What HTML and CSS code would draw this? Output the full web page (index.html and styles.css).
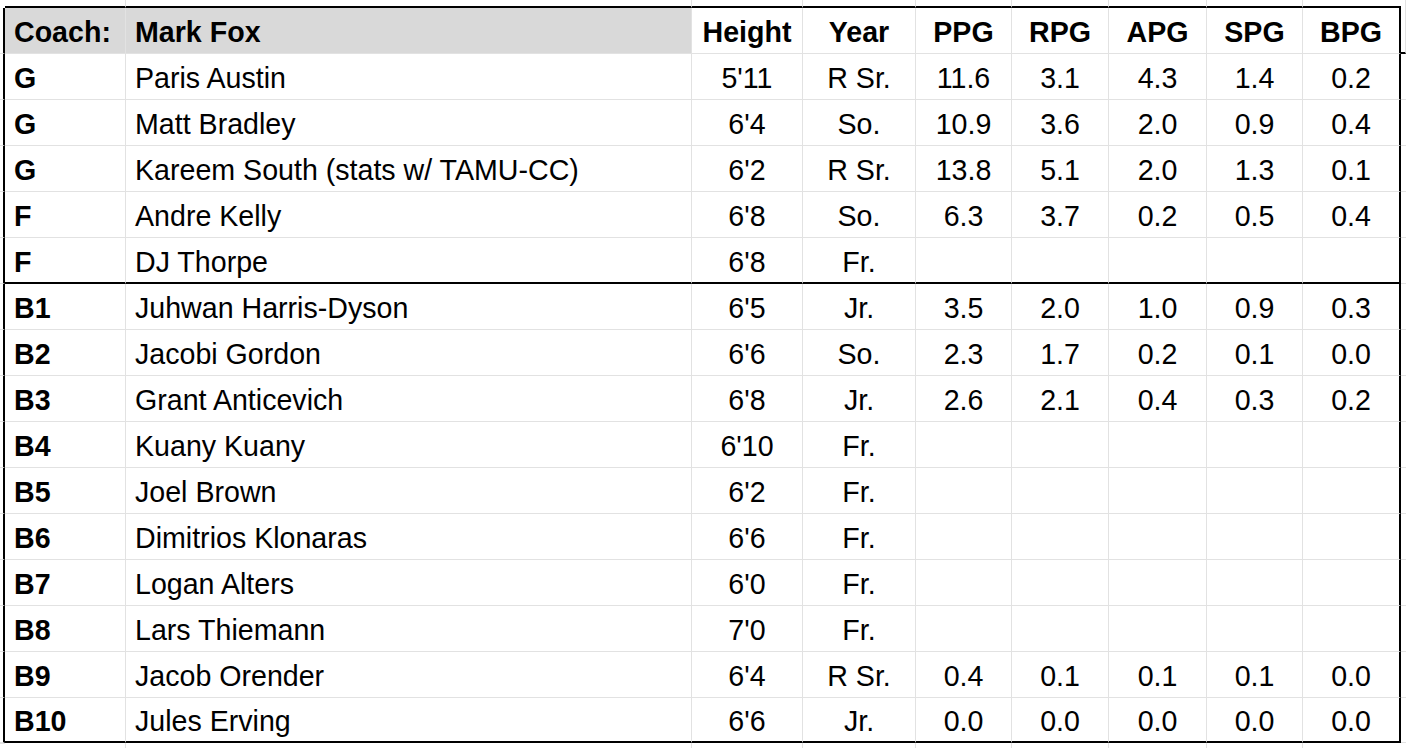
FILE: index.html
```html
<!DOCTYPE html>
<html lang="en">
<head>
<meta charset="utf-8">
<title>Roster</title>
<link rel="stylesheet" href="styles.css">
</head>
<body>
<div class="sheet">
  <div class="row top">
    <div class="gl"></div><div class="c"></div><div class="c"></div><div class="c"></div><div class="c"></div><div class="c"></div><div class="c"></div><div class="c"></div><div class="c"></div><div class="c last"></div><div class="gr"></div>
  </div>
  <div class="row head">
    <div class="gl"></div><div class="c fill">Coach:</div><div class="c fill">Mark Fox</div><div class="c n">Height</div><div class="c n">Year</div><div class="c n">PPG</div><div class="c n">RPG</div><div class="c n">APG</div><div class="c n">SPG</div><div class="c n last">BPG</div><div class="gr"></div>
  </div>
  <div class="row">
    <div class="gl"></div><div class="c b">G</div><div class="c">Paris Austin</div><div class="c n">5'11</div><div class="c n">R Sr.</div><div class="c n">11.6</div><div class="c n">3.1</div><div class="c n">4.3</div><div class="c n">1.4</div><div class="c n last">0.2</div><div class="gr"></div>
  </div>
  <div class="row">
    <div class="gl"></div><div class="c b">G</div><div class="c">Matt Bradley</div><div class="c n">6'4</div><div class="c n">So.</div><div class="c n">10.9</div><div class="c n">3.6</div><div class="c n">2.0</div><div class="c n">0.9</div><div class="c n last">0.4</div><div class="gr"></div>
  </div>
  <div class="row">
    <div class="gl"></div><div class="c b">G</div><div class="c">Kareem South (stats w/ TAMU-CC)</div><div class="c n">6'2</div><div class="c n">R Sr.</div><div class="c n">13.8</div><div class="c n">5.1</div><div class="c n">2.0</div><div class="c n">1.3</div><div class="c n last">0.1</div><div class="gr"></div>
  </div>
  <div class="row">
    <div class="gl"></div><div class="c b">F</div><div class="c">Andre Kelly</div><div class="c n">6'8</div><div class="c n">So.</div><div class="c n">6.3</div><div class="c n">3.7</div><div class="c n">0.2</div><div class="c n">0.5</div><div class="c n last">0.4</div><div class="gr"></div>
  </div>
  <div class="row sep">
    <div class="gl"></div><div class="c b">F</div><div class="c">DJ Thorpe</div><div class="c n">6'8</div><div class="c n">Fr.</div><div class="c n"></div><div class="c n"></div><div class="c n"></div><div class="c n"></div><div class="c n last"></div><div class="gr"></div>
  </div>
  <div class="row">
    <div class="gl"></div><div class="c b">B1</div><div class="c">Juhwan Harris-Dyson</div><div class="c n">6'5</div><div class="c n">Jr.</div><div class="c n">3.5</div><div class="c n">2.0</div><div class="c n">1.0</div><div class="c n">0.9</div><div class="c n last">0.3</div><div class="gr"></div>
  </div>
  <div class="row">
    <div class="gl"></div><div class="c b">B2</div><div class="c">Jacobi Gordon</div><div class="c n">6'6</div><div class="c n">So.</div><div class="c n">2.3</div><div class="c n">1.7</div><div class="c n">0.2</div><div class="c n">0.1</div><div class="c n last">0.0</div><div class="gr"></div>
  </div>
  <div class="row">
    <div class="gl"></div><div class="c b">B3</div><div class="c">Grant Anticevich</div><div class="c n">6'8</div><div class="c n">Jr.</div><div class="c n">2.6</div><div class="c n">2.1</div><div class="c n">0.4</div><div class="c n">0.3</div><div class="c n last">0.2</div><div class="gr"></div>
  </div>
  <div class="row">
    <div class="gl"></div><div class="c b">B4</div><div class="c">Kuany Kuany</div><div class="c n">6'10</div><div class="c n">Fr.</div><div class="c n"></div><div class="c n"></div><div class="c n"></div><div class="c n"></div><div class="c n last"></div><div class="gr"></div>
  </div>
  <div class="row">
    <div class="gl"></div><div class="c b">B5</div><div class="c">Joel Brown</div><div class="c n">6'2</div><div class="c n">Fr.</div><div class="c n"></div><div class="c n"></div><div class="c n"></div><div class="c n"></div><div class="c n last"></div><div class="gr"></div>
  </div>
  <div class="row">
    <div class="gl"></div><div class="c b">B6</div><div class="c">Dimitrios Klonaras</div><div class="c n">6'6</div><div class="c n">Fr.</div><div class="c n"></div><div class="c n"></div><div class="c n"></div><div class="c n"></div><div class="c n last"></div><div class="gr"></div>
  </div>
  <div class="row">
    <div class="gl"></div><div class="c b">B7</div><div class="c">Logan Alters</div><div class="c n">6'0</div><div class="c n">Fr.</div><div class="c n"></div><div class="c n"></div><div class="c n"></div><div class="c n"></div><div class="c n last"></div><div class="gr"></div>
  </div>
  <div class="row">
    <div class="gl"></div><div class="c b">B8</div><div class="c">Lars Thiemann</div><div class="c n">7'0</div><div class="c n">Fr.</div><div class="c n"></div><div class="c n"></div><div class="c n"></div><div class="c n"></div><div class="c n last"></div><div class="gr"></div>
  </div>
  <div class="row">
    <div class="gl"></div><div class="c b">B9</div><div class="c">Jacob Orender</div><div class="c n">6'4</div><div class="c n">R Sr.</div><div class="c n">0.4</div><div class="c n">0.1</div><div class="c n">0.1</div><div class="c n">0.1</div><div class="c n last">0.0</div><div class="gr"></div>
  </div>
  <div class="row end">
    <div class="gl"></div><div class="c b">B10</div><div class="c">Jules Erving</div><div class="c n">6'6</div><div class="c n">Jr.</div><div class="c n">0.0</div><div class="c n">0.0</div><div class="c n">0.0</div><div class="c n">0.0</div><div class="c n last">0.0</div><div class="gr"></div>
  </div>
  <div class="row bot">
    <div class="gl"></div><div class="c"></div><div class="c"></div><div class="c"></div><div class="c"></div><div class="c"></div><div class="c"></div><div class="c"></div><div class="c"></div><div class="c last"></div><div class="gr"></div>
  </div>
</div>
</body>
</html>
```

FILE: styles.css
```css
* {
  box-sizing: border-box;
}

html, body {
  margin: 0;
  padding: 0;
  background: #ffffff;
}

body {
  width: 1406px;
  height: 748px;
  overflow: hidden;
  font-family: "Liberation Sans", Arial, sans-serif;
  font-size: 28.6px;
  color: #000000;
}

.sheet {
  display: grid;
  grid-template-columns: 5px 121px 566px 111px 113px 96px 97px 98px 96px 98px 5px;
  grid-template-rows: 8px repeat(15, 46px) 45px 5px;
}

.row {
  display: contents;
}

.c {
  display: flex;
  align-items: flex-end;
  padding: 0 9px 5px 9px;
  white-space: nowrap;
  overflow: hidden;
  line-height: 32px;
  border-right: 1px solid #e2e2e2;
  border-bottom: 1px solid #e2e2e2;
}

.c.last {
  border-right: 2px solid #000000;
}

.n {
  justify-content: center;
  padding-left: 0;
  padding-right: 0;
}

.b {
  font-weight: bold;
}

.gl {
  border-right: 2px solid #000000;
  border-bottom: 1px solid #e2e2e2;
}

.gr {
  border-bottom: 1px solid #e2e2e2;
}

/* ghost row above the table */
.top .c {
  border-bottom: 2px solid #000000;
  padding: 0;
}

.top .c.last {
  border-right: none;
}

.top .gl {
  border: none;
}

.top .gr {
  border-bottom: none;
  border-right: 1px solid #e2e2e2;
}

/* header */
.head .c {
  font-weight: bold;
}

.head .fill {
  background: #d9d9d9;
}

.head .gr {
  border-right: 1px solid #e2e2e2;
  border-bottom: 2px solid #000000;
}

/* black separators */
.sep .c,
.end .c {
  border-bottom: 2px solid #000000;
  padding-bottom: 4px;
}

/* ghost row below the table */
.bot .c {
  border-bottom: none;
  padding: 0;
}

.bot .c.last {
  border-right: none;
}

.bot .gl {
  border-right: none;
  border-bottom: none;
  border-top: 1px solid #e2e2e2;
}

.bot .gr {
  border-bottom: none;
}
```
